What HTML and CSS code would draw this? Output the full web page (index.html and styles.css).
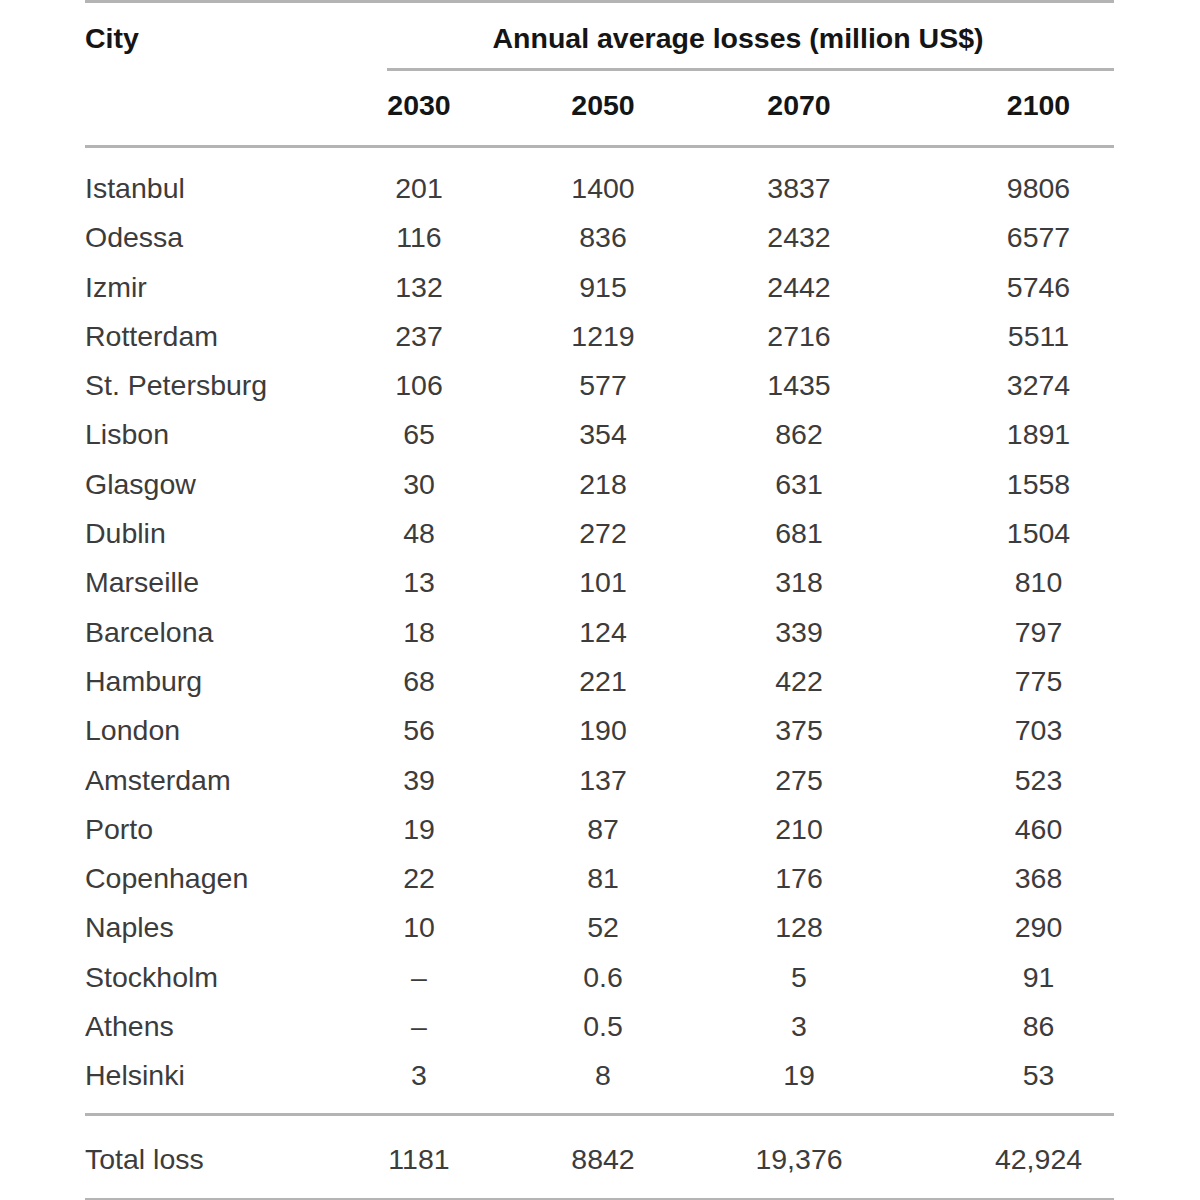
FILE: index.html
```html
<!DOCTYPE html>
<html lang="en">
<head>
<meta charset="utf-8">
<title>Annual average losses</title>
<link rel="stylesheet" href="styles.css">
</head>
<body>
<div class="table">
  <div class="row head-a">
    <div class="cell city-h">City</div>
    <div class="cell annual">Annual average losses (million US$)</div>
  </div>
  <div class="row head-b">
    <div class="cell"></div>
    <div class="cell num">2030</div>
    <div class="cell num">2050</div>
    <div class="cell num">2070</div>
    <div class="cell num last">2100</div>
  </div>
  <div class="body">
    <div class="row data"><div class="cell">Istanbul</div><div class="cell num">201</div><div class="cell num">1400</div><div class="cell num">3837</div><div class="cell num last">9806</div></div>
    <div class="row data"><div class="cell">Odessa</div><div class="cell num">116</div><div class="cell num">836</div><div class="cell num">2432</div><div class="cell num last">6577</div></div>
    <div class="row data"><div class="cell">Izmir</div><div class="cell num">132</div><div class="cell num">915</div><div class="cell num">2442</div><div class="cell num last">5746</div></div>
    <div class="row data"><div class="cell">Rotterdam</div><div class="cell num">237</div><div class="cell num">1219</div><div class="cell num">2716</div><div class="cell num last">5511</div></div>
    <div class="row data"><div class="cell">St. Petersburg</div><div class="cell num">106</div><div class="cell num">577</div><div class="cell num">1435</div><div class="cell num last">3274</div></div>
    <div class="row data"><div class="cell">Lisbon</div><div class="cell num">65</div><div class="cell num">354</div><div class="cell num">862</div><div class="cell num last">1891</div></div>
    <div class="row data"><div class="cell">Glasgow</div><div class="cell num">30</div><div class="cell num">218</div><div class="cell num">631</div><div class="cell num last">1558</div></div>
    <div class="row data"><div class="cell">Dublin</div><div class="cell num">48</div><div class="cell num">272</div><div class="cell num">681</div><div class="cell num last">1504</div></div>
    <div class="row data"><div class="cell">Marseille</div><div class="cell num">13</div><div class="cell num">101</div><div class="cell num">318</div><div class="cell num last">810</div></div>
    <div class="row data"><div class="cell">Barcelona</div><div class="cell num">18</div><div class="cell num">124</div><div class="cell num">339</div><div class="cell num last">797</div></div>
    <div class="row data"><div class="cell">Hamburg</div><div class="cell num">68</div><div class="cell num">221</div><div class="cell num">422</div><div class="cell num last">775</div></div>
    <div class="row data"><div class="cell">London</div><div class="cell num">56</div><div class="cell num">190</div><div class="cell num">375</div><div class="cell num last">703</div></div>
    <div class="row data"><div class="cell">Amsterdam</div><div class="cell num">39</div><div class="cell num">137</div><div class="cell num">275</div><div class="cell num last">523</div></div>
    <div class="row data"><div class="cell">Porto</div><div class="cell num">19</div><div class="cell num">87</div><div class="cell num">210</div><div class="cell num last">460</div></div>
    <div class="row data"><div class="cell">Copenhagen</div><div class="cell num">22</div><div class="cell num">81</div><div class="cell num">176</div><div class="cell num last">368</div></div>
    <div class="row data"><div class="cell">Naples</div><div class="cell num">10</div><div class="cell num">52</div><div class="cell num">128</div><div class="cell num last">290</div></div>
    <div class="row data"><div class="cell">Stockholm</div><div class="cell num">–</div><div class="cell num">0.6</div><div class="cell num">5</div><div class="cell num last">91</div></div>
    <div class="row data"><div class="cell">Athens</div><div class="cell num">–</div><div class="cell num">0.5</div><div class="cell num">3</div><div class="cell num last">86</div></div>
    <div class="row data"><div class="cell">Helsinki</div><div class="cell num">3</div><div class="cell num">8</div><div class="cell num">19</div><div class="cell num last">53</div></div>
  </div>
  <div class="row total">
    <div class="cell">Total loss</div>
    <div class="cell num">1181</div>
    <div class="cell num">8842</div>
    <div class="cell num">19,376</div>
    <div class="cell num last">42,924</div>
  </div>
</div>
</body>
</html>
```
FILE: styles.css
```css
html, body {
  margin: 0;
  padding: 0;
  background: #ffffff;
}

body {
  font-family: "Liberation Sans", Arial, Helvetica, sans-serif;
  font-size: 28.5px;
  color: #3c3c3c;
}

.table {
  margin-left: 85px;
  width: 1029px;
  border-top: 3px solid #b4b4b4;
  border-bottom: 3px solid #b4b4b4;
}

.row {
  display: grid;
  grid-template-columns: 248px 172px 196px 196px 217px;
}

.cell {
  white-space: nowrap;
}

.num {
  text-align: center;
}

.num.last {
  padding-left: 66px;
}

.head-a {
  height: 65px;
  font-weight: bold;
  color: #151515;
}

.head-a .cell {
  line-height: 60px;
  padding-top: 5px;
}

.head-a .annual {
  grid-column: 2 / 6;
  margin-left: 54px;
  padding-right: 25px;
  padding-top: 6px;
  line-height: 59px;
  text-align: center;
  border-bottom: 3px solid #b4b4b4;
  box-sizing: border-box;
  height: 68px;
  margin-bottom: -3px;
}

.head-b {
  height: 74px;
  margin-top: 3px;
  font-weight: bold;
  color: #151515;
  border-bottom: 3px solid #b4b4b4;
}

.head-b .cell {
  line-height: 68px;
}

.body {
  padding-top: 16px;
  padding-bottom: 12px;
  border-bottom: 3px solid #b4b4b4;
}

.data {
  height: 49.3px;
  line-height: 49.3px;
}

.total {
  height: 82px;
}

.total .cell {
  padding-top: 5px;
  line-height: 77px;
}
```
